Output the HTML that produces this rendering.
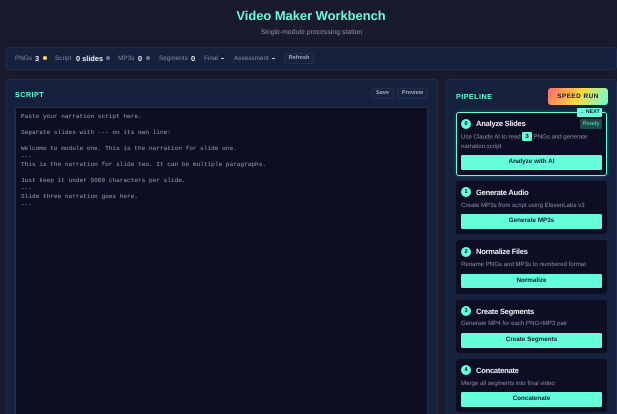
<!DOCTYPE html>
<html lang="en">
<head>
<meta charset="utf-8">
<title>Video Maker Workbench</title>
<style>
html,body{margin:0;padding:0;width:617px;height:414px;overflow:hidden;background:#1a1a2e}
*{box-sizing:border-box}
#w{position:relative;width:617px;height:414px;overflow:hidden;background:#1a1a2e;font-family:"Liberation Sans",sans-serif;color:#e4e4ec;text-rendering:geometricPrecision;filter:blur(.25px)}
.a{position:absolute;white-space:nowrap}
h1{position:absolute;left:0;width:622px;top:6.5px;margin:0;text-align:center;font-size:12.9px;line-height:17px;font-weight:700;color:#64ffda}
.sub{position:absolute;left:0;width:623px;top:28px;text-align:center;font-size:6.9px;line-height:10px;color:#8f8fa8}
.bar{position:absolute;left:6px;top:47px;width:611px;height:23px;background:#16213e;border:1px solid #1f2d50;border-radius:3px}
.l{position:absolute;top:54px;font-size:6.4px;line-height:9px;color:#858ca6;white-space:nowrap}
.v{position:absolute;top:53.5px;font-size:7.4px;line-height:10px;font-weight:700;color:#f0f0f5;white-space:nowrap}
.d{position:absolute;top:56px;width:4px;height:4px;border-radius:50%;background:#6f7690}
.btn{position:absolute;border:1px solid #22304f;border-radius:2px;background:#17233f;color:#a7adc0;font-size:5.6px;font-weight:700;text-align:center;line-height:9.5px;height:11px}
.panel{position:absolute;top:79px;height:345px;background:#16213e;border:1px solid #1f2d50;border-radius:4px}
.ta{position:absolute;left:15px;top:107px;width:413px;height:320px;background:#0d0d24;border:1px solid #22304f;border-radius:2px;padding:5px 5px;font-family:"Liberation Mono",monospace;font-size:6.1px;line-height:8px;color:#a0a0aa;white-space:pre}
.sec{position:absolute;font-size:7.2px;line-height:10px;font-weight:700;color:#64ffda;letter-spacing:.45px}
.card{position:absolute;left:456px;width:151px;background:#0d0d24;border-radius:3px}
.n{position:absolute;left:461px;width:10px;height:10px;border-radius:50%;background:#64ffda;color:#0a0a1f;font-size:5.6px;line-height:10px;font-weight:700;text-align:center}
.t{position:absolute;left:476px;font-size:7.6px;line-height:10px;font-weight:700;color:#eeeef4;white-space:nowrap;letter-spacing:-.27px}
.p{position:absolute;left:461px;font-size:6.1px;line-height:9.3px;color:#9090a8;white-space:nowrap}
.go{position:absolute;left:461px;width:141px;height:14.5px;background:#64ffda;border-radius:1.5px;color:#0f1b2e;font-size:6.3px;line-height:14.5px;font-weight:700;text-align:center}
</style>
</head>
<body>
<div id="w">
<h1>Video Maker Workbench</h1>
<div class="sub">Single-module processing station</div>

<div class="bar"></div>
<div class="l" style="left:15px">PNGs</div><div class="v" style="left:35px">3</div><div class="d" style="left:42.5px;background:#ffd93d"></div>
<div class="l" style="left:55px">Script</div><div class="v" style="left:76px">0 slides</div><div class="d" style="left:105.5px"></div>
<div class="l" style="left:118px">MP3s</div><div class="v" style="left:138px">0</div><div class="d" style="left:146px"></div>
<div class="l" style="left:159px">Segments</div><div class="v" style="left:191px">0</div>
<div class="l" style="left:204px">Final</div><div class="a" style="left:221px;top:58px;width:3px;height:1px;background:#c8cbd8"></div>
<div class="l" style="left:234px">Assessment</div><div class="a" style="left:272px;top:58px;width:3px;height:1px;background:#c8cbd8"></div>
<div class="btn" style="left:284px;top:52.5px;width:30px">Refresh</div>

<div class="panel" style="left:6px;width:432px"></div>
<div class="sec" style="left:15px;top:89.5px">SCRIPT</div>
<div class="btn" style="left:371px;top:88px;width:23px">Save</div>
<div class="btn" style="left:397px;top:88px;width:31px">Preview</div>
<div class="ta">Paste your narration script here.

Separate slides with --- on its own line:

Welcome to module one. This is the narration for slide one.
---
This is the narration for slide two. It can be multiple paragraphs.

Just keep it under 5000 characters per slide.
---
Slide three narration goes here.
---</div>

<div class="panel" style="left:446px;width:171px"></div>
<div class="sec" style="left:456px;top:92px">PIPELINE</div>
<div class="a" style="left:548px;top:88px;width:60px;height:17px;border-radius:3px;background:linear-gradient(120deg,#ff6b6b,#ffd93d 50%,#64ffda);color:#1a1a2e;font-size:6.4px;font-weight:700;letter-spacing:.5px;line-height:17px;text-align:center">SPEED RUN</div>

<div class="card" style="top:111.5px;height:64.5px;border:1px solid #64ffda;box-shadow:0 0 4px rgba(100,255,218,.25)"></div>
<div class="a" style="left:577px;top:108px;width:25px;height:8.5px;background:#64ffda;color:#0f1b2e;border-radius:1px;font-size:5.2px;line-height:8.5px;font-weight:700;text-align:center">→ NEXT</div>
<div class="n" style="top:119px">0</div>
<div class="t" style="top:119.3px">Analyze Slides</div>
<div class="a" style="left:580px;top:118.5px;width:22px;height:10px;background:#1e4a4a;border-radius:1.5px;color:#64d8b8;font-size:5.8px;line-height:10px;text-align:center">Ready</div>
<div class="p" style="top:131.5px">Use Claude AI to read <span style="display:inline-block;width:9.5px;height:9.5px;background:#64ffda;color:#0a0a1f;border-radius:1.5px;text-align:center;font-weight:700;line-height:9.5px;vertical-align:middle">3</span> PNGs and generate</div>
<div class="p" style="top:141.5px">narration script</div>
<div class="go" style="top:155px">Analyze with AI</div>

<div class="card" style="top:181px;height:53px"></div>
<div class="n" style="top:187px">1</div>
<div class="t" style="top:187.5px">Generate Audio</div>
<div class="p" style="top:201px">Create MP3s from script using ElevenLabs v3</div>
<div class="go" style="top:214px">Generate MP3s</div>

<div class="card" style="top:240px;height:53.5px"></div>
<div class="n" style="top:247px">2</div>
<div class="t" style="top:247.3px">Normalize Files</div>
<div class="p" style="top:260px">Rename PNGs and MP3s to numbered format</div>
<div class="go" style="top:273.5px">Normalize</div>

<div class="card" style="top:300px;height:53px"></div>
<div class="n" style="top:306px">3</div>
<div class="t" style="top:306.5px">Create Segments</div>
<div class="p" style="top:319px">Generate MP4 for each PNG+MP3 pair</div>
<div class="go" style="top:333px">Create Segments</div>

<div class="card" style="top:359px;height:52.5px"></div>
<div class="n" style="top:365px">4</div>
<div class="t" style="top:365.5px">Concatenate</div>
<div class="p" style="top:379px">Merge all segments into final video</div>
<div class="go" style="top:392px">Concatenate</div>
</div>
</body>
</html>
